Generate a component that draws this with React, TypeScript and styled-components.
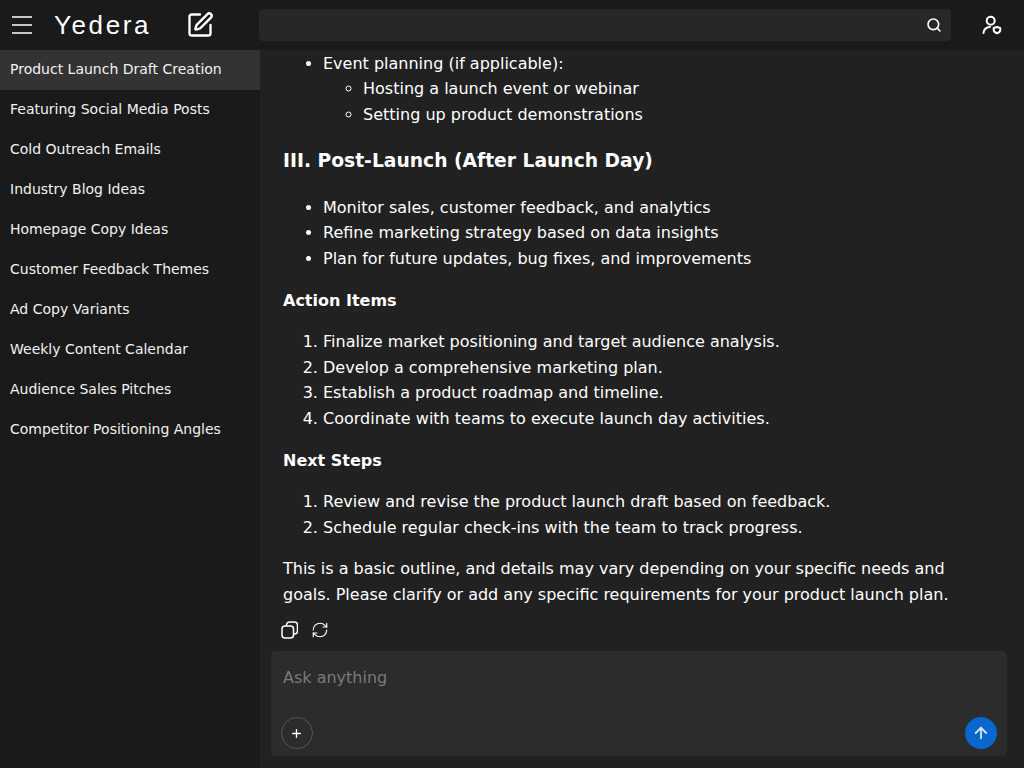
import { ArrowUp, Plus, RefreshCw, Search, SquarePen } from "lucide-react";
import styled, { createGlobalStyle } from "styled-components";

const GlobalStyle = createGlobalStyle`
  html, body {
    margin: 0;
    height: 100%;
    background: #212121;
    color: #fff;
    font-family: "DejaVu Sans", sans-serif;
    overflow: hidden;
  }
`;

const Page = styled.div`
  width: 1024px;
  height: 768px;
  display: flex;
  flex-direction: column;
`;

const TopBar = styled.header`
  height: 50px;
  flex: none;
  background: #1a1a1a;
  display: flex;
  align-items: center;
`;

const Brand = styled.div`
  width: 259px;
  flex: none;
  display: flex;
  align-items: center;
  padding-left: 12px;
  box-sizing: border-box;
`;

const Logo = styled.span`
  font-family: "Liberation Sans", sans-serif;
  font-size: 26px;
  letter-spacing: 2.6px;
  margin-left: 22px;
  width: 131.5px;
`;

const SearchBox = styled.div`
  width: 692px;
  height: 32px;
  background: #272727;
  border-radius: 4px;
  display: flex;
  align-items: center;
  justify-content: flex-end;
  padding-right: 9px;
  box-sizing: border-box;
`;

const UserButton = styled.div`
  margin-left: 29px;
  display: flex;
`;

const Body = styled.div`
  flex: 1;
  min-height: 0;
  display: flex;
`;

const Sidebar = styled.nav`
  width: 260px;
  flex: none;
  background: #1a1a1a;
`;

const ChatItem = styled.div<{ $active?: boolean }>`
  height: 40px;
  line-height: 38px;
  padding-left: 10px;
  font-size: 14px;
  color: #f2f2f2;
  background: ${(props) => (props.$active ? "#333333" : "transparent")};
`;

const Main = styled.main`
  flex: 1;
  min-width: 0;
  display: flex;
  flex-direction: column;
  background: #212121;
`;

const Conversation = styled.div`
  height: 601px;
  flex: none;
  box-sizing: border-box;
  overflow: hidden;
  padding: 0.6px 40px 0 23px;
  font-size: 16px;
  line-height: 25.6px;
`;

const BulletList = styled.ul`
  margin: 0;
  padding-left: 40px;
`;

const NumberList = styled.ol`
  margin: 0;
  padding-left: 40px;
`;

const Heading = styled.h3`
  font-size: 18.72px;
  line-height: 1.6;
  margin: 18.72px 0;
`;

const SubHeading = styled.h4`
  font-size: 16px;
  line-height: 25.6px;
  margin: 16px 0;
`;

const Paragraph = styled.p`
  margin: 16px 0 0;
`;

const MessageTools = styled.div`
  height: 0;
  display: flex;
  align-items: center;
  gap: 13px;
  margin-left: 20px;
  transform: translateY(-21px);
`;

const Composer = styled.div`
  margin-left: 11px;
  width: 736px;
  height: 105px;
  background: #2c2c2c;
  border-radius: 5px;
  padding: 14px 10px 7px 10px;
  box-sizing: border-box;
  display: flex;
  flex-direction: column;
  justify-content: space-between;
`;

const Placeholder = styled.div`
  font-size: 16px;
  line-height: 25px;
  padding-left: 2px;
  color: #777a7d;
`;

const ComposerActions = styled.div`
  display: flex;
  justify-content: space-between;
  align-items: center;
`;

const AttachButton = styled.button`
  width: 32px;
  height: 32px;
  padding: 0 1px 0 0;
  border-radius: 50%;
  border: 1px solid #555;
  background: transparent;
  color: #fff;
  display: flex;
  align-items: center;
  justify-content: center;
`;

const SendButton = styled.button`
  width: 32px;
  height: 32px;
  padding: 0;
  border: none;
  border-radius: 50%;
  background: #0868cf;
  color: #d5e6f8;
  display: flex;
  align-items: center;
  justify-content: center;
`;

const chats = [
  "Product Launch Draft Creation",
  "Featuring Social Media Posts",
  "Cold Outreach Emails",
  "Industry Blog Ideas",
  "Homepage Copy Ideas",
  "Customer Feedback Themes",
  "Ad Copy Variants",
  "Weekly Content Calendar",
  "Audience Sales Pitches",
  "Competitor Positioning Angles",
];

function HamburgerIcon() {
  return (
    <svg width="20" height="18" viewBox="0 0 20 18" fill="none" stroke="#fff" strokeWidth="1.5">
      <path d="M0 1h20M0 9h20M0 17h20" />
    </svg>
  );
}

function UserShieldIcon() {
  return (
    <svg width="24" height="24" viewBox="0 0 24 24" fill="none" stroke="#fff" strokeWidth="2" strokeLinecap="round" strokeLinejoin="round">
      <circle cx="10.7" cy="7.7" r="4" />
      <path d="M3.500 20c0-3 2.500-5.500 6.500-6.300" />
      <path d="M13.700 15l3.300-1 3.300 1v2c0 1.600-1.300 2.600-3.300 3.300-2-.7-3.300-1.700-3.300-3.300z" />
    </svg>
  );
}

function CopyIcon() {
  return (
    <svg width="18" height="18" viewBox="0 0 18 18" fill="none" stroke="#fff" strokeWidth="1.500">
      <rect x="2" y="5" width="11.500" height="12" rx="3" />
      <path d="M6.500 5V4a3 3 0 0 1 3-3h5a3 3 0 0 1 3 3v6a3 3 0 0 1-3 3h-1" />
    </svg>
  );
}

export default function App() {
  return (
    <Page>
      <GlobalStyle />
      <TopBar>
        <Brand>
          <HamburgerIcon />
          <Logo>Yedera</Logo>
          <SquarePen size={28} strokeWidth={2} color="#fff" />
        </Brand>
        <SearchBox>
          <Search size={16} strokeWidth={2.4} color="#fff" />
        </SearchBox>
        <UserButton>
          <UserShieldIcon />
        </UserButton>
      </TopBar>
      <Body>
        <Sidebar>
          {chats.map((chat, i) => (
            <ChatItem key={chat} $active={i === 0}>
              {chat}
            </ChatItem>
          ))}
        </Sidebar>
        <Main>
          <Conversation>
            <BulletList>
              <li>
                Event planning (if applicable):
                <BulletList>
                  <li>Hosting a launch event or webinar</li>
                  <li>Setting up product demonstrations</li>
                </BulletList>
              </li>
            </BulletList>
            <Heading>III. Post-Launch (After Launch Day)</Heading>
            <BulletList>
              <li>Monitor sales, customer feedback, and analytics</li>
              <li>Refine marketing strategy based on data insights</li>
              <li>Plan for future updates, bug fixes, and improvements</li>
            </BulletList>
            <SubHeading>Action Items</SubHeading>
            <NumberList>
              <li>Finalize market positioning and target audience analysis.</li>
              <li>Develop a comprehensive marketing plan.</li>
              <li>Establish a product roadmap and timeline.</li>
              <li>Coordinate with teams to execute launch day activities.</li>
            </NumberList>
            <SubHeading>Next Steps</SubHeading>
            <NumberList>
              <li>Review and revise the product launch draft based on feedback.</li>
              <li>Schedule regular check-ins with the team to track progress.</li>
            </NumberList>
            <Paragraph>
              This is a basic outline, and details may vary depending on your specific needs and
              goals. Please clarify or add any specific requirements for your product launch plan.
            </Paragraph>
          </Conversation>
          <MessageTools>
            <CopyIcon />
            <RefreshCw size={18} strokeWidth={1.5} color="#fff" />
          </MessageTools>
          <Composer>
            <Placeholder>Ask anything</Placeholder>
            <ComposerActions>
              <AttachButton>
                <Plus size={13} strokeWidth={2.5} />
              </AttachButton>
              <SendButton>
                <ArrowUp size={18} strokeWidth={2.4} />
              </SendButton>
            </ComposerActions>
          </Composer>
        </Main>
      </Body>
    </Page>
  );
}
